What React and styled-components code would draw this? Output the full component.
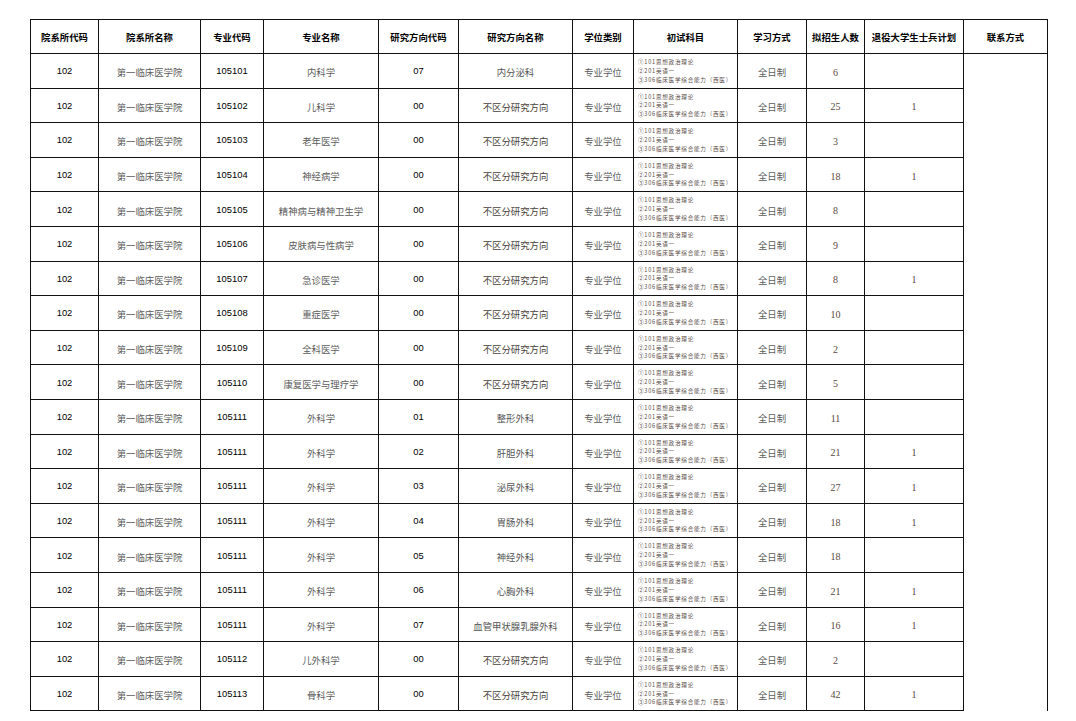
import React from "react";
import styled, { createGlobalStyle } from "styled-components";

const GlobalStyle = createGlobalStyle`
  html, body {
    margin: 0;
    padding: 0;
    background: #ffffff;
  }
  body {
    font-family: "Liberation Sans", "Noto Sans CJK SC", sans-serif;
  }
`;

const Page = styled.div`
  padding: 19px 0 0 30px;
  width: 1076px;
  height: 721px;
  box-sizing: border-box;
  overflow: hidden;
`;

const Table = styled.table`
  border-collapse: collapse;
  table-layout: fixed;
  width: 1017px;
`;

const Head = styled.th`
  height: 33px;
  padding: 0;
  border: 1px solid #111;
  font-family: "Noto Sans CJK SC", sans-serif;
  font-weight: 700;
  font-size: 9.4px;
  color: #000;
  text-align: center;
  vertical-align: middle;
  white-space: nowrap;
`;

const Row = styled.tr`
  height: 34.6px;
`;

const Cell = styled.td`
  padding: 0;
  border: 1px solid #111;
  text-align: center;
  vertical-align: middle;
  white-space: nowrap;
  font-size: ${(p) => (p.$kind === "serif" ? "10px" : "9.4px")};
  font-family: ${(p) =>
    p.$kind === "num"
      ? `"Liberation Sans", sans-serif`
      : p.$kind === "serif"
      ? `"Liberation Serif", serif`
      : `"Noto Sans CJK SC", sans-serif`};
  color: ${(p) => (p.$kind === "num" ? "#000" : p.$tone || "#5c5c5c")};
  padding-top: ${(p) => (p.$kind === "num" ? "0" : "3px")};
`;

const Subjects = styled.td`
  padding: 1px 0 0 4px;
  border: 1px solid #111;
  text-align: left;
  vertical-align: middle;
  font-family: "Noto Sans CJK SC", sans-serif;
  font-size: 5.6px;
  line-height: 8.8px;
  letter-spacing: 0.75px;
  color: #5a4d48;
  white-space: nowrap;
`;

const Contact = styled.td`
  padding: 0;
  border: 1px solid #111;
  border-bottom: none;
`;

const cols = [68, 102, 63, 115, 80, 114, 61, 104, 69, 58, 99, 84];
const headers = [
  "院系所代码",
  "院系所名称",
  "专业代码",
  "专业名称",
  "研究方向代码",
  "研究方向名称",
  "学位类别",
  "初试科目",
  "学习方式",
  "拟招生人数",
  "退役大学生士兵计划",
  "联系方式",
];

const NONE = "不区分研究方向";
const rows = [
  ["105101", "内科学", "07", "内分泌科", "6", ""],
  ["105102", "儿科学", "00", NONE, "25", "1"],
  ["105103", "老年医学", "00", NONE, "3", ""],
  ["105104", "神经病学", "00", NONE, "18", "1"],
  ["105105", "精神病与精神卫生学", "00", NONE, "8", ""],
  ["105106", "皮肤病与性病学", "00", NONE, "9", ""],
  ["105107", "急诊医学", "00", NONE, "8", "1"],
  ["105108", "重症医学", "00", NONE, "10", ""],
  ["105109", "全科医学", "00", NONE, "2", ""],
  ["105110", "康复医学与理疗学", "00", NONE, "5", ""],
  ["105111", "外科学", "01", "整形外科", "11", ""],
  ["105111", "外科学", "02", "肝胆外科", "21", "1"],
  ["105111", "外科学", "03", "泌尿外科", "27", "1"],
  ["105111", "外科学", "04", "胃肠外科", "18", "1"],
  ["105111", "外科学", "05", "神经外科", "18", ""],
  ["105111", "外科学", "06", "心胸外科", "21", "1"],
  ["105111", "外科学", "07", "血管甲状腺乳腺外科", "16", "1"],
  ["105112", "儿外科学", "00", NONE, "2", ""],
  ["105113", "骨科学", "00", NONE, "42", "1"],
];

function SubjectList() {
  return (
    <Subjects>
      ①101思想政治理论
      <br />
      ②201英语一
      <br />
      ③306临床医学综合能力（西医）
    </Subjects>
  );
}

export default function App() {
  return (
    <>
      <GlobalStyle />
      <Page>
        <Table>
          <colgroup>
            {cols.map((w, i) => (
              <col key={i} style={{ width: w }} />
            ))}
          </colgroup>
          <thead>
            <tr>
              {headers.map((h) => (
                <Head key={h}>{h}</Head>
              ))}
            </tr>
          </thead>
          <tbody>
            {rows.map(([code, name, dir, dirName, count, soldier], i) => (
              <Row key={i}>
                <Cell $kind="num">102</Cell>
                <Cell>第一临床医学院</Cell>
                <Cell $kind="num">{code}</Cell>
                <Cell>{name}</Cell>
                <Cell $kind="num">{dir}</Cell>
                <Cell $tone={dirName === NONE ? "#4a3f3c" : "#555"}>{dirName}</Cell>
                <Cell>专业学位</Cell>
                <SubjectList />
                <Cell>全日制</Cell>
                <Cell $kind="serif" $tone="#5a4a42">
                  {count}
                </Cell>
                <Cell $kind="serif" $tone="#5a4a42">
                  {soldier}
                </Cell>
                {i === 0 && <Contact rowSpan={rows.length} />}
              </Row>
            ))}
          </tbody>
        </Table>
      </Page>
    </>
  );
}
